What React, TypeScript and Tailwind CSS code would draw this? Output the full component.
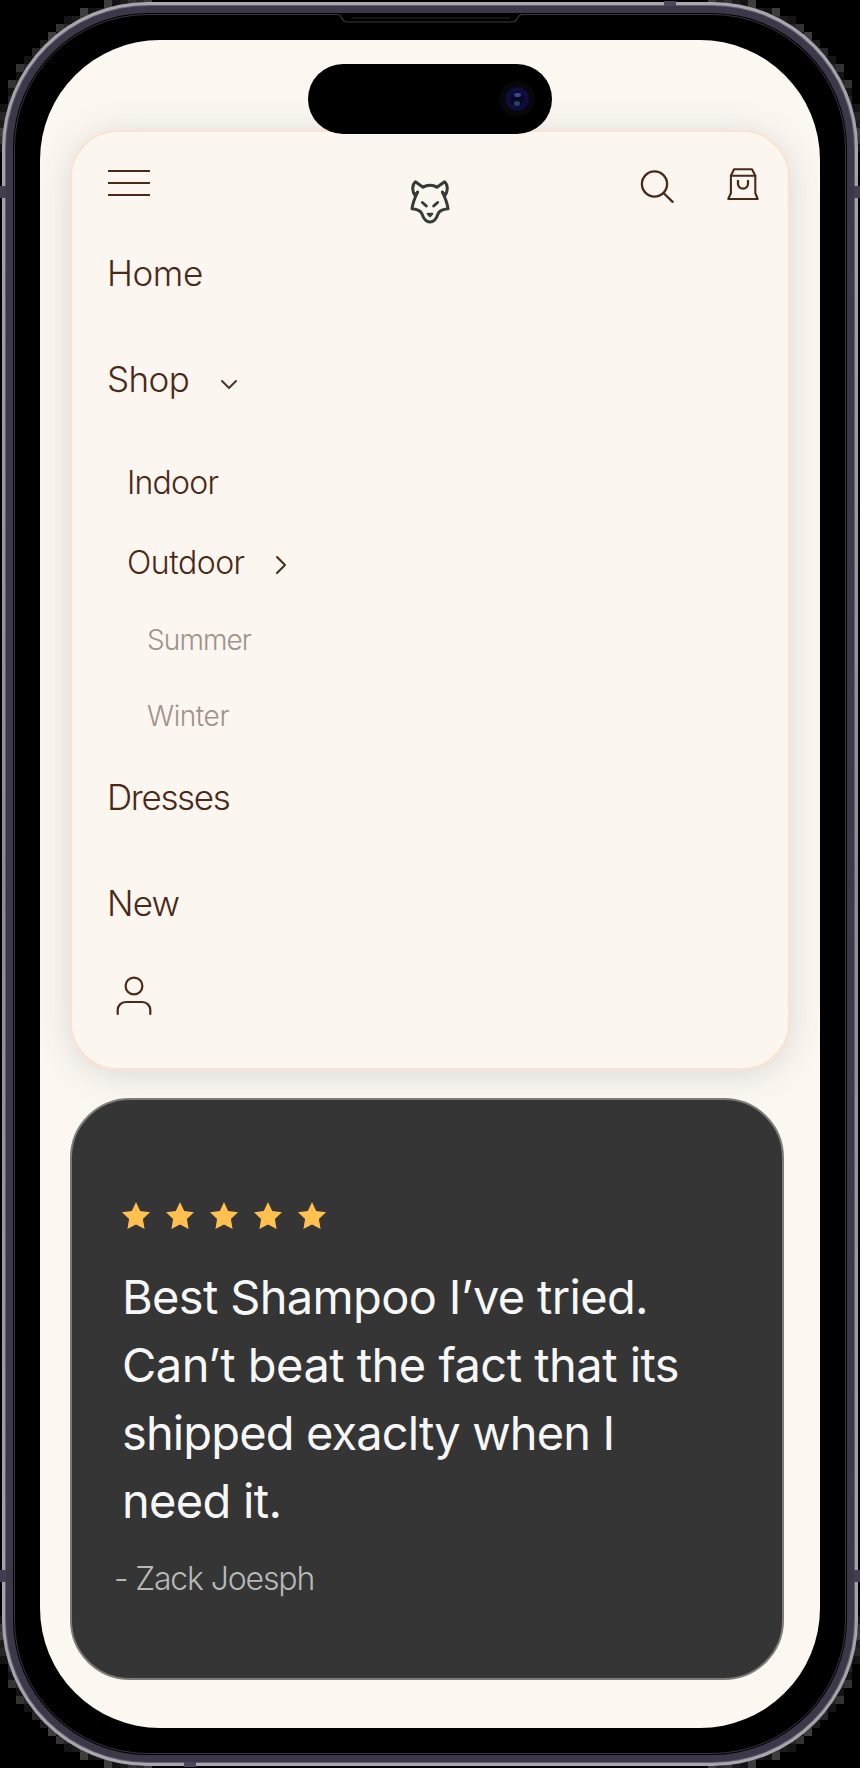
import React from "react";

type Corner = { x: number; y: number; tone: string };

const tones = ["#1c1c1c", "#333333", "#262626", "#3d3d3d", "#141414"];

function cornerCells(): Corner[] {
  const cells: Corner[] = [];
  for (let y = 0; y < 152; y += 8) {
    for (let x = 0; x < 152; x += 8) {
      const near = Math.hypot(148 - x - 8, 148 - y - 8);
      const far = Math.hypot(148 - x, 148 - y);
      if (near < 146 && far > 146) {
        cells.push({ x, y, tone: tones[(x / 8 + (y / 8) * 3) % 5] });
      }
    }
  }
  return cells;
}

const cells = cornerCells();

function CornerEdge({ className }: { className: string }) {
  return (
    <svg className={className} width="152" height="152" shapeRendering="crispEdges">
      {cells.map((c) => (
        <rect key={`${c.x}-${c.y}`} x={c.x} y={c.y} width="8" height="8" fill={c.tone} />
      ))}
    </svg>
  );
}

function Wolf() {
  return (
    <svg width="40" height="46" viewBox="0 0 40 46" fill="none" stroke="#353b38" strokeWidth="3" strokeLinecap="round" strokeLinejoin="round">
      <path d="M7.6 13.2C6 14.5 5.5 16 5.4 17.2C2 12.5 1.6 6.5 5.4 2.8L13 8.3C17 5.6 23 5.6 27 8.3L34.6 2.8C38.4 6.5 38 12.5 34.6 17.2C34.5 16 34 14.5 32.4 13.2" />
      <path d="M7.6 13.2C4.5 19.5 2.6 25 2 29.8C7 30.3 10.8 31.5 12 35C13.5 39.5 16 43 20 43C24 43 26.5 39.5 28 35C29.2 31.5 33 30.3 38 29.8C37.4 25 35.5 19.5 32.4 13.2" />
      <path d="M12.4 23.5L16.3 27M27.6 23.5L23.7 27" />
      <path d="M17.7 34.7H22.3L20 37.2Z" fill="#353b38" strokeWidth="2" />
    </svg>
  );
}

function Star() {
  return (
    <svg width="28" height="28" viewBox="0 0 28 28" fill="#ffc04f">
      <path d="M14 0L18.2 9L28 10.3L20.9 17L22.6 27L14 22.4L5.4 27L7.1 17L0 10.3L9.8 9Z" />
    </svg>
  );
}

function MenuCard() {
  return (
    <nav className="relative h-[940px] w-[720px] rounded-[48px] border-[2.5px] border-[#fde2d0] bg-[#fcf6f0] text-[#4a2a17] shadow-[0_4px_34px_rgba(70,80,95,0.19)]">
      <div className="flex h-[94px] items-start pl-[36px] pr-[29px] pt-[36px]">
        <div className="mt-[2px] flex w-[42px] flex-col gap-[10px]">
          <span className="h-[2px] bg-[#4a2a17]" />
          <span className="h-[2px] bg-[#4a2a17]" />
          <span className="h-[2px] bg-[#4a2a17]" />
        </div>
        <div className="ml-[260px] mt-[11px]">
          <Wolf />
        </div>
        <svg className="ml-[190px] mt-[2px]" width="34" height="34" viewBox="0 0 34 34" fill="none" stroke="#4a2a17" strokeWidth="2.3" strokeLinecap="round">
          <circle cx="14.5" cy="14" r="12.6" />
          <path d="M23.5 23L32.6 31.8" />
        </svg>
        <svg className="ml-auto" width="32" height="33" viewBox="0 0 32 33" fill="none" stroke="#4a2a17" strokeWidth="2.1" strokeLinejoin="round" strokeLinecap="round">
          <path d="M7 1.3H25L28.3 7.7V25L30.7 31H1.3L3.9 25V7.7Z" />
          <path d="M3.9 7.7H28.3" />
          <path d="M11 13V15.5C11 18.4 13.2 20.6 16 20.6S21 18.4 21 15.5V13" strokeWidth="2.3" />
        </svg>
      </div>
      <ul className="flex flex-col pl-[35px] text-[35px] leading-[48px] font-light">
        <li className="mt-[23px] tracking-[-0.4px]">Home</li>
        <li className="mt-[58px] flex items-center">
          <span className="w-[113px] tracking-[-0.6px]">Shop</span>
          <svg className="mt-[12px]" width="18" height="12" viewBox="0 0 18 12" fill="none" stroke="#4a372c" strokeWidth="2" strokeLinecap="round" strokeLinejoin="round">
            <path d="M2 2L9 9L16 2" />
          </svg>
        </li>
        <li className="mt-[56px] pl-[20px] text-[32px] tracking-[-0.8px]">Indoor</li>
        <li className="mt-[32px] flex items-center pl-[20px] text-[32px]">
          <span className="w-[148px] tracking-[-0.5px]">Outdoor</span>
          <svg className="mt-[4px]" width="12" height="20" viewBox="0 0 12 20" fill="none" stroke="#4a2a17" strokeWidth="2" strokeLinecap="round" strokeLinejoin="round">
            <path d="M2 2L10 10L2 18" />
          </svg>
        </li>
        <li className="mt-[29px] pl-[40px] text-[28px] tracking-[-0.9px] text-[#9f928a]">Summer</li>
        <li className="mt-[28px] pl-[40px] text-[28px] tracking-[-0.4px] text-[#9f928a]">Winter</li>
        <li className="mt-[33px] tracking-[-1.35px]">Dresses</li>
        <li className="mt-[58px] tracking-[-0.9px]">New</li>
      </ul>
      <svg className="ml-[43px] mt-[48px]" width="38" height="42" viewBox="0 0 38 42" fill="none" stroke="#4a2a17" strokeWidth="2.2" strokeLinecap="round">
        <circle cx="19" cy="11" r="8.4" />
        <path d="M2.7 39V35.5C2.7 30.5 6 27 11 27H27C32 27 35.3 30.5 35.3 35.5V39" />
      </svg>
    </nav>
  );
}

const quote = [
  { text: "Best Shampoo I’ve tried.", spacing: "tracking-[-0.67px]" },
  { text: "Can’t beat the fact that its", spacing: "tracking-[-0.54px]" },
  { text: "shipped exaclty when I", spacing: "tracking-[-0.87px]" },
  { text: "need it.", spacing: "tracking-[-0.7px]" },
];

function ReviewCard() {
  return (
    <section className="relative mt-[28px] h-[582px] w-[714px] rounded-[60px] border-2 border-[#7d7a77] bg-[#353535] pl-[50px] pt-[102px]">
      <div className="flex gap-4">
        {[0, 1, 2, 3, 4].map((i) => (
          <Star key={i} />
        ))}
      </div>
      <div className="mt-[33px] text-[47px] leading-[68px] text-[#f7f7f7]">
        {quote.map((line) => (
          <p key={line.text} className={`whitespace-nowrap ${line.spacing}`}>{line.text}</p>
        ))}
      </div>
      <p className="-ml-[8px] mt-[20px] whitespace-nowrap text-[32px] leading-[48px] font-light tracking-[-1.15px] text-[#b8b8b8]">- Zack Joesph</p>
    </section>
  );
}

export default function App() {
  return (
    <div className="relative h-[1768px] w-[860px] overflow-hidden bg-black p-[2px] font-['Inter',sans-serif]">
      <CornerEdge className="absolute left-0 top-0" />
      <CornerEdge className="absolute right-0 top-0 -scale-x-100" />
      <CornerEdge className="absolute bottom-0 left-0 -scale-y-100" />
      <CornerEdge className="absolute bottom-0 right-0 -scale-100" />
      <div className="relative h-[1764px] rounded-[146px] bg-[#2a282e]">
        <div className="h-full rounded-[146px] bg-[linear-gradient(#aaa6ad,#8f8b93_50%,#aaa6ad)] p-[3px]">
          <div className="h-full rounded-[143px] bg-[#66616f] p-px">
            <div className="h-full rounded-[142px] bg-[#3d374a] p-[7px]">
              <div className="h-full rounded-[135px] bg-black p-px">
                <div className="h-full rounded-[134px] border border-[#39363e] bg-black p-[25px]">
                  <main className="flex h-[1688px] w-[780px] flex-col overflow-hidden rounded-[120px] bg-[#fcf7f1] pl-[30px] pt-[90px]">
                    <MenuCard />
                    <ReviewCard />
                  </main>
                </div>
              </div>
            </div>
          </div>
        </div>
      </div>
      <svg className="absolute left-[336px] top-[12px]" width="188" height="12" fill="none">
        <path d="M2 1H186V4H2Z" fill="#000" />
        <path d="M0 2.5H2C6 2.5 5 10 11 10H176C182 10 181 2.5 186 2.5H188" stroke="#3a3a3a" strokeWidth="1.2" />
        <path d="M16 6H174" stroke="#141414" strokeWidth="2" />
      </svg>
      <div className="absolute left-[308px] top-[64px] flex h-[70px] w-[244px] items-center justify-end rounded-full bg-black pr-[17px]">
        <div className="flex size-[36px] items-center justify-center rounded-full bg-[#070709]">
          <div className="flex size-[24px] flex-col items-center justify-center gap-[4px] rounded-full bg-[radial-gradient(#06071c_25%,#100e45_55%,#070712_90%)]">
            <span className="h-[4px] w-[7px] rounded-full bg-[#3b4590]" />
            <span className="h-[5px] w-[6px] rounded-full bg-[#1f4560]" />
          </div>
        </div>
      </div>
      <span className="absolute left-0 top-[186px] h-[12px] w-[6px] bg-[#443d50]" />
      <span className="absolute right-0 top-[186px] h-[12px] w-[6px] bg-[#443d50]" />
      <span className="absolute left-0 top-[1570px] h-[12px] w-[6px] bg-[#443d50]" />
      <span className="absolute right-0 top-[1570px] h-[12px] w-[6px] bg-[#443d50]" />
      <span className="absolute left-[664px] top-[1px] h-[5px] w-[12px] bg-[#4d465a]" />
      <span className="absolute bottom-[1px] left-[184px] h-[5px] w-[12px] bg-[#4d465a]" />
    </div>
  );
}
